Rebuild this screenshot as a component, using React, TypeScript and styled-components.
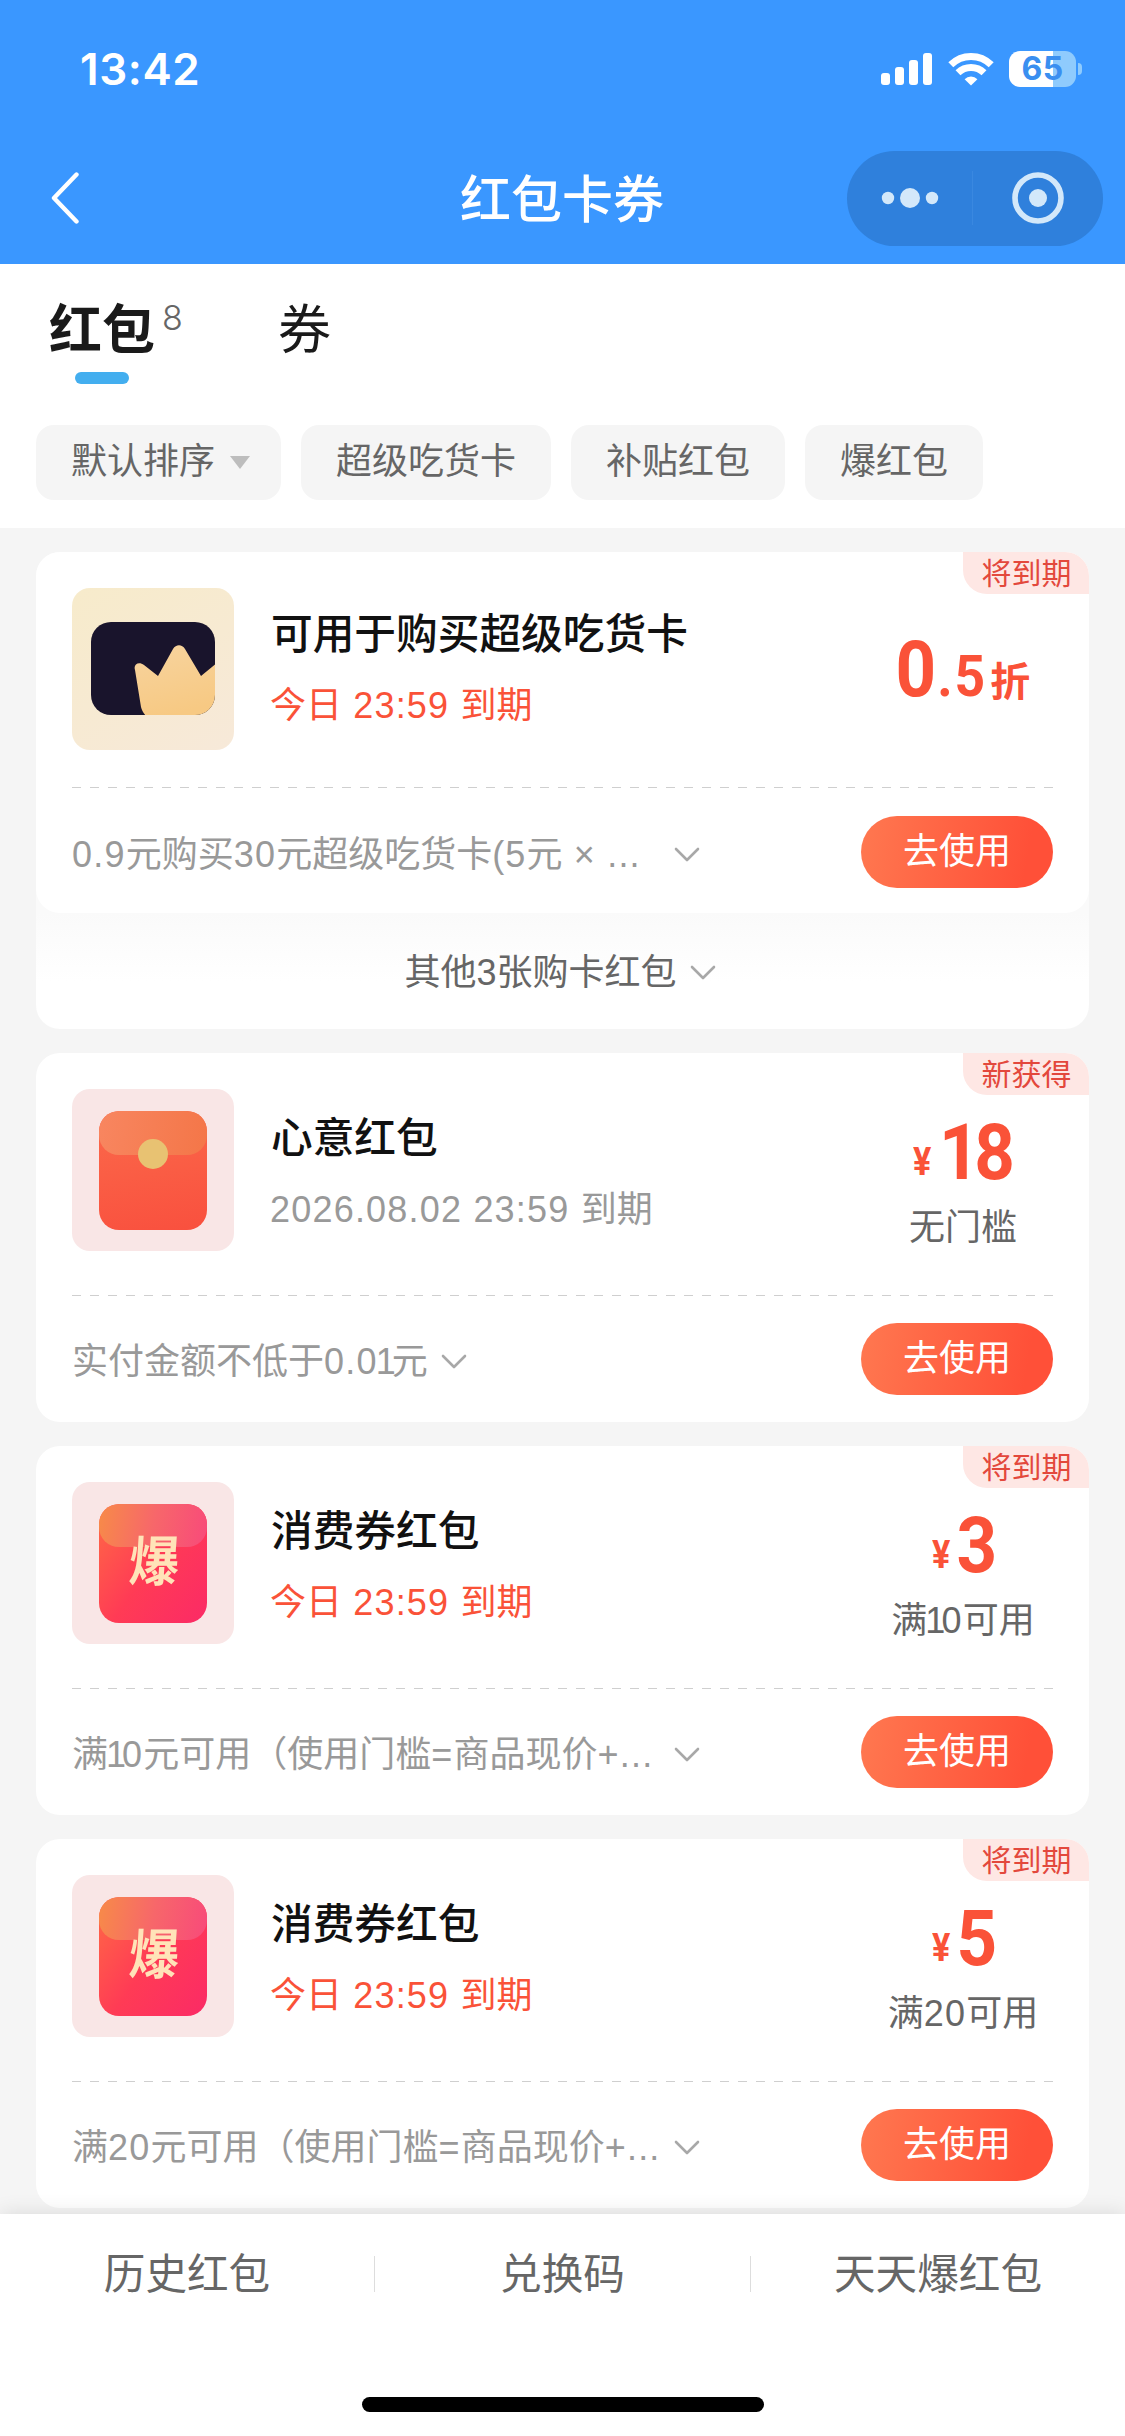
import React from "react";
import styled, { createGlobalStyle, css } from "styled-components";

const FONT = `"Liberation Sans", "Noto Sans CJK SC", sans-serif`;
const RED = "#fa5238";

const GlobalStyle = createGlobalStyle`
  *, *::before, *::after { box-sizing: border-box; }
  html, body { margin: 0; padding: 0; background: #f5f5f5; }
  body { font-family: ${FONT}; -webkit-font-smoothing: antialiased; }
  button { font: inherit; border: 0; padding: 0; background: none; }
`;

const Screen = styled.div`
  width: 1125px;
  height: 2436px;
  display: flex;
  flex-direction: column;
  overflow: hidden;
  background: #f5f5f5;
`;

/* ---------- header ---------- */

const Header = styled.header`
  flex: none;
  height: 264px;
  background: #3a97ff;
  color: #fff;
`;

const StatusBar = styled.div`
  height: 132px;
  padding: 6px 43px 0 80px;
  display: flex;
  align-items: center;
  justify-content: space-between;
`;

const Clock = styled.span`
  font: 600 44px/60px Inter, "Liberation Sans", sans-serif;
  letter-spacing: 0.6px;
`;

const StatusIcons = styled.div`
  display: flex;
  align-items: center;
  gap: 15px;
`;

const BatteryWrap = styled.div`
  display: flex;
  align-items: center;
  gap: 2px;
`;

const BatteryBody = styled.div`
  width: 67px;
  height: 36px;
  border-radius: 11px;
  background: linear-gradient(90deg, #fff 65%, #8fcbfd 65%);
  color: #3a8ff0;
  font: 700 32px/36px Inter, "Liberation Sans", sans-serif;
  letter-spacing: 0.5px;
  text-align: center;
`;

const BatteryTip = styled.div`
  width: 4px;
  height: 12px;
  border-radius: 0 5px 5px 0;
  background: #8fcbfd;
`;

const NavBar = styled.div`
  height: 132px;
  padding: 0 22px 0 50px;
  display: grid;
  grid-template-columns: 255px 1fr 255px;
  align-items: center;
`;

const BackButton = styled.button`
  display: flex;
`;

const NavTitle = styled.h1`
  margin: 6px 0 0 -29px;
  font-size: 51px;
  line-height: 72px;
  font-weight: 500;
  text-align: center;
`;

const Capsule = styled.div`
  width: 256px;
  height: 95px;
  margin-left: -1px;
  border-radius: 48px;
  background: #2f80dc;
  display: grid;
  grid-template-columns: 125px 1px 1fr;
  align-items: center;
  justify-items: center;
`;

const CapsuleDivider = styled.div`
  width: 1px;
  height: 54px;
  background: #3a88e0;
`;

/* ---------- tabs and filters ---------- */

const FilterPanel = styled.section`
  flex: none;
  height: 264px;
  padding: 32px 36px 28px;
  background: #fff;
  display: flex;
  flex-direction: column;
  justify-content: space-between;
`;

const Tabs = styled.nav`
  display: flex;
  padding-left: 13px;
`;

const Tab = styled.div<{ $wide?: boolean }>`
  width: ${(p) => (p.$wide ? "229px" : "auto")};
  display: flex;
  flex-direction: column;
`;

const TabLabel = styled.div<{ $active?: boolean }>`
  display: flex;
  align-items: flex-start;
  height: 76px;
  font-size: 53px;
  line-height: 70px;
  font-weight: ${(p) => (p.$active ? 700 : 400)};
  color: #1a1a1a;
`;

const TabCount = styled.sup`
  margin: 5px 0 0 7px;
  font: 400 34px/34px Inter, "Liberation Sans", sans-serif;
  font-weight: 300;
  color: #666;
`;

const TabIndicator = styled.div`
  width: 54px;
  height: 12px;
  margin-left: 26px;
  border-radius: 6px;
  background: #43aeef;
`;

const Chips = styled.div`
  display: flex;
  gap: 20px;
`;

const Chip = styled.button`
  height: 75px;
  padding: 0 35px 2px;
  border-radius: 18px;
  background: #f5f5f5;
  color: #666;
  font-size: 36px;
  line-height: 70px;
  display: flex;
  align-items: center;
`;

const Caret = styled.i`
  margin: 2px -4px 0 15px;
  border: 10px solid transparent;
  border-top: 13px solid #bdbdbd;
  border-bottom: 0;
`;

/* ---------- coupon list ---------- */

const List = styled.main`
  flex: 1;
  min-height: 0;
  padding: 24px 36px 0;
  display: flex;
  flex-direction: column;
  gap: 24px;
  overflow: hidden;
`;

const Group = styled.section`
  flex: none;
  border-radius: 24px;
  background: linear-gradient(#fafafa 361px, #fff 430px);
`;

const CardBox = styled.article<{ $compact?: boolean }>`
  position: relative;
  flex: none;
  height: ${(p) => (p.$compact ? 361 : 369)}px;
  padding: 0 36px;
  border-radius: 24px;
  background: #fff;
`;

const Badge = styled.span`
  position: absolute;
  top: 0;
  right: 0;
  width: 126px;
  height: 42px;
  padding: 1px 0 0 1px;
  border-radius: 0 24px 0 24px;
  background: #fee7e4;
  color: #e3483c;
  font-size: 30px;
  line-height: 41px;
  text-align: center;
`;

const Summary = styled.div<{ $compact?: boolean }>`
  height: ${(p) => (p.$compact ? 235 : 242)}px;
  padding-top: 36px;
  display: grid;
  grid-template-columns: 162px 1fr 182px;
  column-gap: 37px;
  align-items: start;
`;

const Thumb = styled.div<{ $tone: "gold" | "rose" }>`
  width: 162px;
  height: 162px;
  border-radius: 18px;
  background: ${(p) =>
    p.$tone === "gold" ? "linear-gradient(150deg, #f7ebcb, #f7e9d9)" : "#f9e6e6"};
  display: flex;
  align-items: center;
  justify-content: center;
`;

const Envelope = styled.div<{ $hot?: boolean }>`
  position: relative;
  width: 108px;
  height: 119px;
  border-radius: 20px;
  overflow: hidden;
  display: flex;
  justify-content: center;
  background: ${(p) =>
    p.$hot
      ? "linear-gradient(125deg, #ff6a45 0%, #ff3b55 50%, #fb2a66 100%)"
      : "linear-gradient(170deg, #fb6a4b, #f9503e)"};
  &::before {
    content: "";
    position: absolute;
    inset: 0 0 auto 0;
    height: ${(p) => (p.$hot ? 43 : 44)}px;
    border-radius: 20px;
    background: ${(p) =>
      p.$hot
        ? "linear-gradient(100deg, #f78b48, #f7676a 50%, #f84a7a)"
        : "linear-gradient(100deg, #f88660, #f47648)"};
  }
`;

const Seal = styled.i`
  position: relative;
  width: 30px;
  height: 30px;
  margin-top: 28px;
  border-radius: 50%;
  background: #e8c272;
`;

const Burst = styled.b`
  position: relative;
  margin-top: 33px;
  font-size: 50px;
  line-height: 54px;
  color: #ffe3b8;
  transform: skewX(-4deg) scaleY(1.08);
`;

const Info = styled.div<{ $compact?: boolean }>`
  padding-top: ${(p) => (p.$compact ? 19 : 22)}px;
  white-space: nowrap;
`;

const Title = styled.h2`
  margin: 0;
  font-size: 41.7px;
  line-height: 56px;
  font-weight: 500;
  color: #111;
`;

const Expiry = styled.p<{ $urgent?: boolean }>`
  margin: 18px 0 0 -1px;
  font-size: 36px;
  line-height: 50px;
  color: ${(p) => (p.$urgent ? RED : "#999")};
`;

const Latin = styled.span`
  letter-spacing: 1.2px;
`;

const One = styled.span`
  margin-left: -2px;
  letter-spacing: -4px;
`;

const Value = styled.div<{ $compact?: boolean }>`
  padding-top: ${(p) => (p.$compact ? 24 : 42)}px;
  text-align: center;
  white-space: nowrap;
`;

const Price = styled.div`
  display: flex;
  justify-content: center;
  align-items: baseline;
  height: 80px;
  line-height: 80px;
  font-family: Roboto, "Noto Sans CJK SC", sans-serif;
  font-weight: 700;
  color: ${RED};
`;

const priceSizes = {
  yen: css`
    font-size: 38px;
    position: relative;
    top: -4px;
    margin-right: 4px;
    transform: scaleX(0.9);
  `,
  big: css`
    font-size: 77px;
    letter-spacing: -6px;
    transform: scaleX(0.92);
  `,
  mid: css`
    font-size: 58px;
    letter-spacing: 2px;
    margin-left: 3px;
    transform: scaleX(0.92);
  `,
  unit: css`
    font-size: 40px;
    font-weight: 700;
    margin-left: 1px;
  `,
};

const PricePart = styled.span<{ $size: keyof typeof priceSizes }>`
  ${(p) => priceSizes[p.$size]}
`;

const Condition = styled.div`
  margin: 10px 0 0 2px;
  font-size: 36px;
  line-height: 50px;
  color: #666;
`;

const Perforation = styled.div`
  height: 1px;
  background: repeating-linear-gradient(90deg, #cfcfcf 0 9px, transparent 9px 18px);
`;

const Detail = styled.div<{ $compact?: boolean }>`
  padding-top: ${(p) => (p.$compact ? 28 : 27)}px;
  display: flex;
  align-items: center;
  justify-content: space-between;
`;

const Rule = styled.div<{ $clipped?: boolean }>`
  width: ${(p) => (p.$clipped ? "628px" : "auto")};
  padding-top: 6px;
  display: flex;
  align-items: center;
  justify-content: space-between;
  gap: 13px;
  font-size: 36px;
  line-height: 50px;
  color: #999;
  white-space: nowrap;
`;

const UseButton = styled.button`
  flex: none;
  width: 192px;
  height: 72px;
  border-radius: 36px;
  background: linear-gradient(100deg, #ff7850 0%, #ff5038 85%);
  color: #fff;
  font-size: 36px;
  line-height: 70px;
`;

const More = styled.button`
  width: 100%;
  height: 116px;
  display: flex;
  align-items: center;
  justify-content: center;
  gap: 13px;
  padding: 3px 5px 0 0;
  font-size: 36px;
  line-height: 50px;
  color: #666;
`;

/* ---------- bottom bar ---------- */

const BottomBar = styled.footer`
  position: relative;
  flex: none;
  height: 222px;
  background: #fff;
  box-shadow: 0 0 20px rgba(0, 0, 0, 0.12);
  display: flex;
  flex-direction: column;
  justify-content: space-between;
  align-items: center;
  padding-bottom: 24px;
`;

const Links = styled.div`
  width: 100%;
  height: 120px;
  display: grid;
  grid-template-columns: 374px 376px 375px;
  align-items: center;
`;

const Link = styled.a`
  height: 36px;
  font-size: 41.6px;
  line-height: 38px;
  text-align: center;
  color: #666;
  & + & {
    border-left: 1px solid #ddd;
  }
`;

const HomeIndicator = styled.div`
  width: 402px;
  height: 15px;
  border-radius: 8px;
  background: #000;
`;

/* ---------- icons ---------- */

const Signal = () => (
  <svg width="52" height="34" viewBox="0 0 52 34" fill="#fff">
    <rect x="0" y="21" width="9" height="12" rx="3" />
    <rect x="14" y="15" width="9" height="18" rx="3" />
    <rect x="28" y="8" width="9" height="25" rx="3" />
    <rect x="42" y="1" width="9" height="32" rx="3" />
  </svg>
);

const Wifi = () => (
  <svg width="46" height="34" viewBox="0 0 46 34" fill="none" stroke="#fff" strokeWidth="7">
    <path d="M2.8 12.8a28.6 28.6 0 0 1 40.4 0" />
    <path d="M10 20.8a18.6 18.6 0 0 1 26 0" />
    <path d="M23 33.6l-6.4-6.4a9 9 0 0 1 12.8 0z" fill="#fff" stroke="none" />
  </svg>
);

const BackIcon = () => (
  <svg width="30" height="52" viewBox="0 0 30 52" fill="none" stroke="#fff" strokeWidth="4.4">
    <path d="M26.5 2.5L4 26l22.5 23.5" strokeLinecap="round" strokeLinejoin="round" />
  </svg>
);

const DotsIcon = () => (
  <svg width="58" height="22" viewBox="0 0 58 22" fill="#d3e8fa">
    <circle cx="7" cy="11" r="6.2" />
    <circle cx="29" cy="11" r="10" />
    <circle cx="51" cy="11" r="6.2" />
  </svg>
);

const TargetIcon = () => (
  <svg width="54" height="54" viewBox="0 0 54 54">
    <circle cx="27" cy="27" r="23" fill="none" stroke="#d3e8fa" strokeWidth="5.6" />
    <circle cx="27" cy="27" r="9" fill="#d3e8fa" />
  </svg>
);

const Chevron = () => (
  <svg width="26" height="16" viewBox="0 0 26 16" fill="none" stroke="#a8a8a8" strokeWidth="2.6">
    <path d="M2 2l11 11L24 2" strokeLinecap="round" strokeLinejoin="round" />
  </svg>
);

const CrownCard = () => (
  <svg width="162" height="162" viewBox="0 0 162 162">
    <defs>
      <clipPath id="cardShape">
        <rect x="19" y="34" width="124" height="93" rx="20" />
      </clipPath>
      <linearGradient id="crownFill" x1="0" y1="0" x2="0.3" y2="1">
        <stop offset="0" stopColor="#f7d49f" />
        <stop offset="1" stopColor="#f7c983" />
      </linearGradient>
    </defs>
    <g clipPath="url(#cardShape)">
      <rect x="19" y="34" width="124" height="93" fill="#19142c" />
      <path
        d="M63 82C61 76 67 73 72 77L86 88L101 61C104 56 110 56 113 61L129 88L146 74V130H77C72 127 70 123 69 119Z"
        fill="url(#crownFill)"
      />
    </g>
  </svg>
);

/* ---------- data ---------- */

type Coupon = {
  kind: "card" | "gift" | "burst";
  badge: string;
  title: string;
  expiry: string;
  urgent?: boolean;
  amount: string;
  discount?: boolean;
  condition?: string;
  rule: string;
  clipped?: boolean;
};

const featured: Coupon = {
  kind: "card",
  badge: "将到期",
  title: "可用于购买超级吃货卡",
  expiry: "今日 23:59 到期",
  urgent: true,
  amount: "0.5",
  discount: true,
  rule: "0.9元购买30元超级吃货卡(5元 × ...",
  clipped: true,
};

const coupons: Coupon[] = [
  {
    kind: "gift",
    badge: "新获得",
    title: "心意红包",
    expiry: "2026.08.02 23:59 到期",
    amount: "18",
    condition: "无门槛",
    rule: "实付金额不低于0.01元",
  },
  {
    kind: "burst",
    badge: "将到期",
    title: "消费券红包",
    expiry: "今日 23:59 到期",
    urgent: true,
    amount: "3",
    condition: "满10可用",
    rule: "满10元可用（使用门槛=商品现价+...",
    clipped: true,
  },
  {
    kind: "burst",
    badge: "将到期",
    title: "消费券红包",
    expiry: "今日 23:59 到期",
    urgent: true,
    amount: "5",
    condition: "满20可用",
    rule: "满20元可用（使用门槛=商品现价+...",
    clipped: true,
  },
];

/* Widens Latin runs slightly and tightens the narrow figure one. */
const Mixed = ({ text }: { text: string }) => (
  <span>
    {text
      .split(/(1|[\x20-\x30\x32-\x7e×]+)/)
      .filter(Boolean)
      .map((run, i) => {
        if (run === "1") return <One key={i}>1</One>;
        return /[\x20-\x7e×]/.test(run) ? (
          <Latin key={i}>{run}</Latin>
        ) : (
          <React.Fragment key={i}>{run}</React.Fragment>
        );
      })}
  </span>
);

const Art = ({ kind }: { kind: Coupon["kind"] }) => {
  if (kind === "card") {
    return (
      <Thumb $tone="gold">
        <CrownCard />
      </Thumb>
    );
  }
  return (
    <Thumb $tone="rose">
      <Envelope $hot={kind === "burst"}>{kind === "burst" ? <Burst>爆</Burst> : <Seal />}</Envelope>
    </Thumb>
  );
};

const CouponCard = ({ c }: { c: Coupon }) => {
  const compact = !c.condition;
  const [whole, fraction] = c.amount.split(".");
  return (
    <CardBox $compact={compact}>
      <Badge>{c.badge}</Badge>
      <Summary $compact={compact}>
        <Art kind={c.kind} />
        <Info $compact={compact}>
          <Title>{c.title}</Title>
          <Expiry $urgent={c.urgent}>
            <Mixed text={c.expiry} />
          </Expiry>
        </Info>
        <Value $compact={!!c.condition}>
          <Price>
            {!c.discount && <PricePart $size="yen">¥</PricePart>}
            <PricePart $size="big">{whole}</PricePart>
            {fraction && <PricePart $size="mid">.{fraction}</PricePart>}
            {c.discount && <PricePart $size="unit">折</PricePart>}
          </Price>
          {c.condition && (
            <Condition>
              <Mixed text={c.condition} />
            </Condition>
          )}
        </Value>
      </Summary>
      <Perforation />
      <Detail $compact={compact}>
        <Rule $clipped={c.clipped}>
          <Mixed text={c.rule} />
          <Chevron />
        </Rule>
        <UseButton>去使用</UseButton>
      </Detail>
    </CardBox>
  );
};

export default function App() {
  return (
    <Screen>
      <GlobalStyle />
      <Header>
        <StatusBar>
          <Clock>13:42</Clock>
          <StatusIcons>
            <Signal />
            <Wifi />
            <BatteryWrap>
              <BatteryBody>65</BatteryBody>
              <BatteryTip />
            </BatteryWrap>
          </StatusIcons>
        </StatusBar>
        <NavBar>
          <BackButton aria-label="返回">
            <BackIcon />
          </BackButton>
          <NavTitle>红包卡券</NavTitle>
          <Capsule>
            <DotsIcon />
            <CapsuleDivider />
            <TargetIcon />
          </Capsule>
        </NavBar>
      </Header>

      <FilterPanel>
        <Tabs>
          <Tab $wide>
            <TabLabel $active>
              红包<TabCount>8</TabCount>
            </TabLabel>
            <TabIndicator />
          </Tab>
          <Tab>
            <TabLabel>券</TabLabel>
          </Tab>
        </Tabs>
        <Chips>
          <Chip>
            默认排序
            <Caret />
          </Chip>
          <Chip>超级吃货卡</Chip>
          <Chip>补贴红包</Chip>
          <Chip>爆红包</Chip>
        </Chips>
      </FilterPanel>

      <List>
        <Group>
          <CouponCard c={featured} />
          <More>
            其他3张购卡红包
            <Chevron />
          </More>
        </Group>
        {coupons.map((c, i) => (
          <CouponCard key={i} c={c} />
        ))}
      </List>

      <BottomBar>
        <Links>
          <Link>历史红包</Link>
          <Link>兑换码</Link>
          <Link>天天爆红包</Link>
        </Links>
        <HomeIndicator />
      </BottomBar>
    </Screen>
  );
}
